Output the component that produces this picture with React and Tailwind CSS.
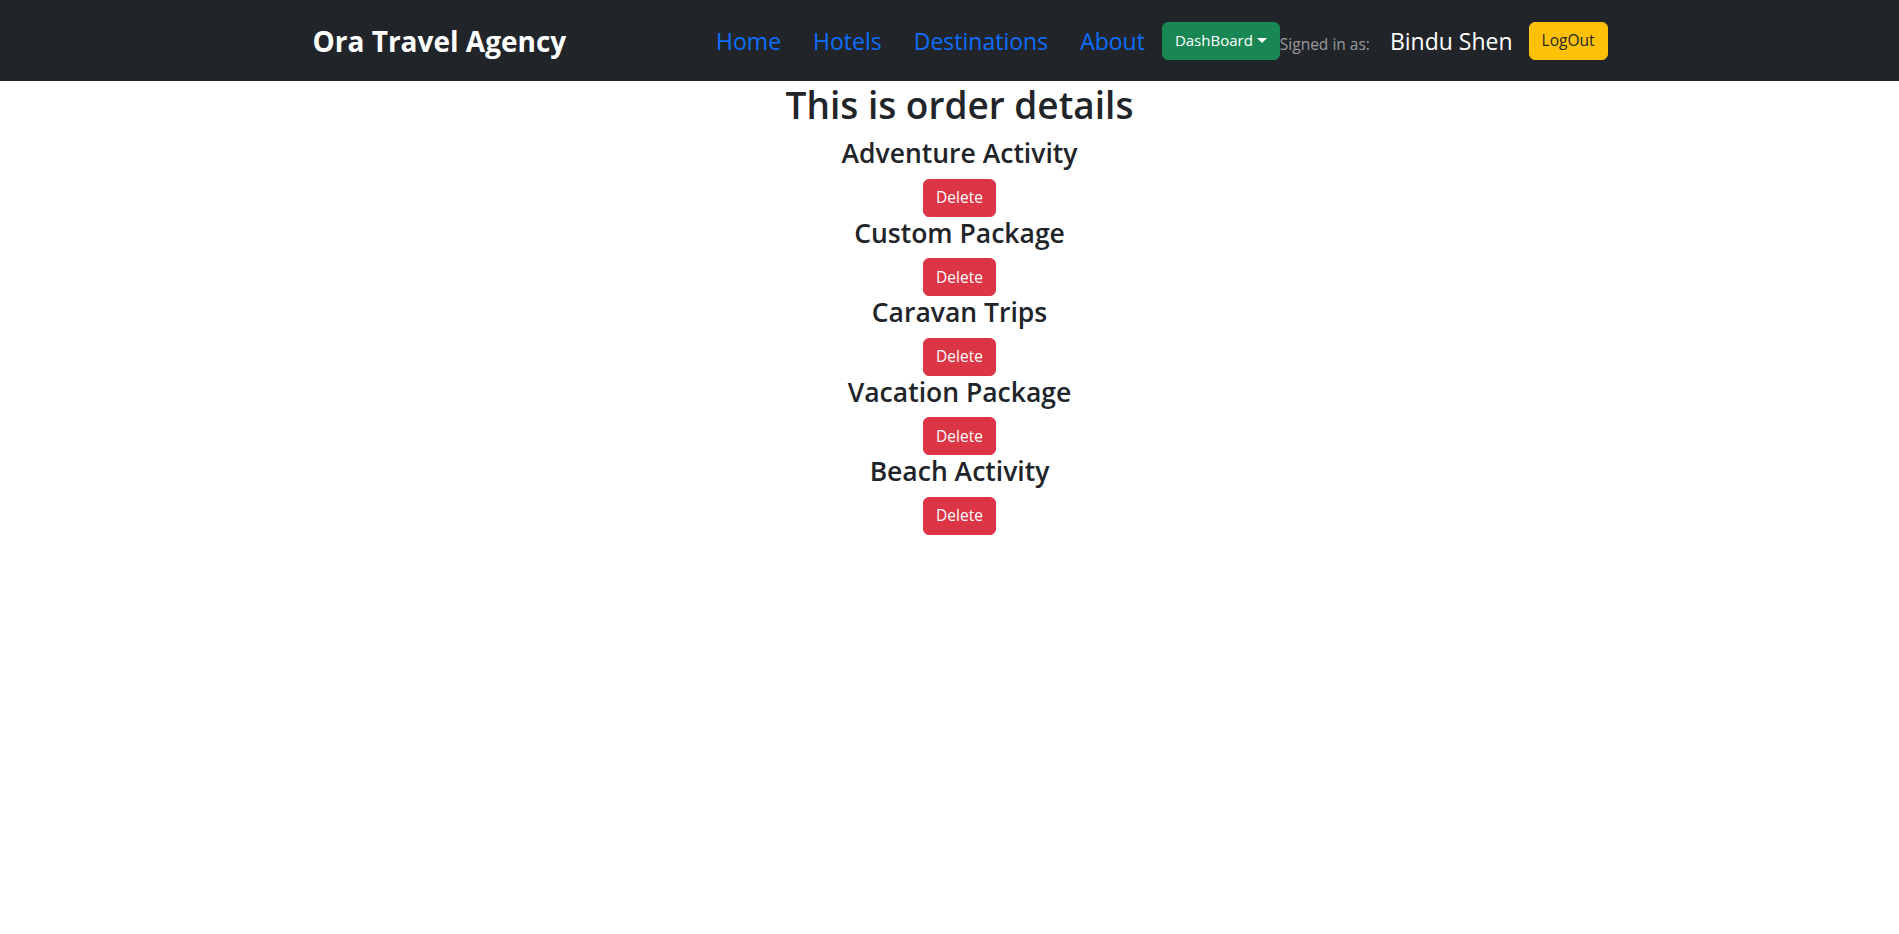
import React from "react";

const items = [
  "Adventure Activity",
  "Custom Package",
  "Caravan Trips",
  "Vacation Package",
  "Beach Activity",
];

export default function App() {
  return (
    <div className="min-h-screen bg-white font-['Open_Sans','Noto_Sans',sans-serif]">
      <nav className="h-[81px] bg-[#212529]">
        <div className="mx-auto flex h-full w-[1320px] items-center pl-[23px] pr-[2px]">
          <a href="#" className="text-[28px] font-bold leading-[38px] text-white">
            Ora Travel Agency
          </a>
          <div className="ml-auto flex items-center">
            <div className="flex items-center gap-[32px] text-[23px] leading-[34px] text-[#0d6efd]">
              <a href="#">Home</a>
              <a href="#">Hotels</a>
              <a href="#">Destinations</a>
              <a href="#">About</a>
            </div>
            <button className="ml-[17px] flex h-[38px] items-center rounded-[6px] border border-[#198754] bg-[#198754] px-3 text-[15px] text-white">
              DashBoard
              <span className="ml-[4px] inline-block h-0 w-0 border-x-[5px] border-t-[5px] border-x-transparent border-t-white" />
            </button>
            <div className="flex items-baseline">
              <span className="text-[15.5px] text-[#9a9b9d]">Signed in as:</span>
              <span className="ml-[20px] text-[23px] leading-[34px] text-white">Bindu Shen</span>
            </div>
            <button className="ml-4 flex h-[38px] items-center rounded-[6px] border border-[#ffc107] bg-[#ffc107] px-3 text-[15.5px] text-[#212529]">
              LogOut
            </button>
          </div>
        </div>
      </nav>
      <main className="flex flex-col items-center pl-[20px] text-[#212529]">
        <h1 className="mb-2 text-[37px] font-semibold leading-[48px]">This is order details</h1>
        {items.map((name) => (
          <div key={name} className="flex flex-col items-center">
            <h3 className="mb-2 text-[26.5px] font-semibold leading-[33.6px]">{name}</h3>
            <button className="h-[38px] rounded-[6px] border border-[#dc3545] bg-[#dc3545] px-3 text-[15.5px] text-white">
              Delete
            </button>
          </div>
        ))}
      </main>
    </div>
  );
}
